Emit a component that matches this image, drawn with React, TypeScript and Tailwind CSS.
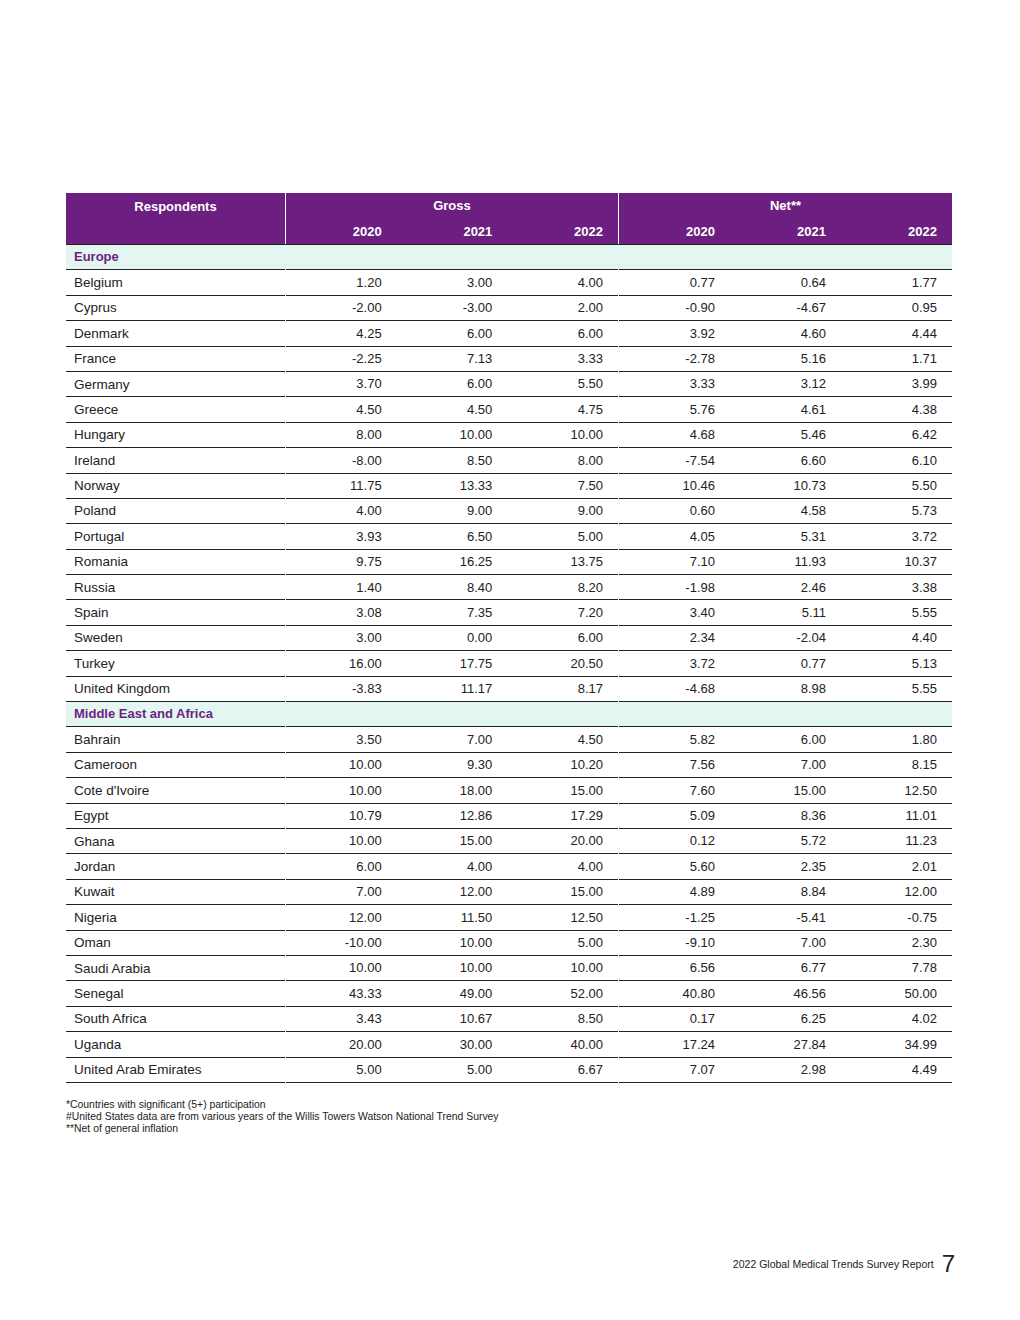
type Row = [string, string, string, string, string, string, string];

interface Section {
  title: string;
  rows: Row[];
}

const sections: Section[] = [
  {
    title: "Europe",
    rows: [
      ["Belgium", "1.20", "3.00", "4.00", "0.77", "0.64", "1.77"],
      ["Cyprus", "-2.00", "-3.00", "2.00", "-0.90", "-4.67", "0.95"],
      ["Denmark", "4.25", "6.00", "6.00", "3.92", "4.60", "4.44"],
      ["France", "-2.25", "7.13", "3.33", "-2.78", "5.16", "1.71"],
      ["Germany", "3.70", "6.00", "5.50", "3.33", "3.12", "3.99"],
      ["Greece", "4.50", "4.50", "4.75", "5.76", "4.61", "4.38"],
      ["Hungary", "8.00", "10.00", "10.00", "4.68", "5.46", "6.42"],
      ["Ireland", "-8.00", "8.50", "8.00", "-7.54", "6.60", "6.10"],
      ["Norway", "11.75", "13.33", "7.50", "10.46", "10.73", "5.50"],
      ["Poland", "4.00", "9.00", "9.00", "0.60", "4.58", "5.73"],
      ["Portugal", "3.93", "6.50", "5.00", "4.05", "5.31", "3.72"],
      ["Romania", "9.75", "16.25", "13.75", "7.10", "11.93", "10.37"],
      ["Russia", "1.40", "8.40", "8.20", "-1.98", "2.46", "3.38"],
      ["Spain", "3.08", "7.35", "7.20", "3.40", "5.11", "5.55"],
      ["Sweden", "3.00", "0.00", "6.00", "2.34", "-2.04", "4.40"],
      ["Turkey", "16.00", "17.75", "20.50", "3.72", "0.77", "5.13"],
      ["United Kingdom", "-3.83", "11.17", "8.17", "-4.68", "8.98", "5.55"],
    ],
  },
  {
    title: "Middle East and Africa",
    rows: [
      ["Bahrain", "3.50", "7.00", "4.50", "5.82", "6.00", "1.80"],
      ["Cameroon", "10.00", "9.30", "10.20", "7.56", "7.00", "8.15"],
      ["Cote d'Ivoire", "10.00", "18.00", "15.00", "7.60", "15.00", "12.50"],
      ["Egypt", "10.79", "12.86", "17.29", "5.09", "8.36", "11.01"],
      ["Ghana", "10.00", "15.00", "20.00", "0.12", "5.72", "11.23"],
      ["Jordan", "6.00", "4.00", "4.00", "5.60", "2.35", "2.01"],
      ["Kuwait", "7.00", "12.00", "15.00", "4.89", "8.84", "12.00"],
      ["Nigeria", "12.00", "11.50", "12.50", "-1.25", "-5.41", "-0.75"],
      ["Oman", "-10.00", "10.00", "5.00", "-9.10", "7.00", "2.30"],
      ["Saudi Arabia", "10.00", "10.00", "10.00", "6.56", "6.77", "7.78"],
      ["Senegal", "43.33", "49.00", "52.00", "40.80", "46.56", "50.00"],
      ["South Africa", "3.43", "10.67", "8.50", "0.17", "6.25", "4.02"],
      ["Uganda", "20.00", "30.00", "40.00", "17.24", "27.84", "34.99"],
      ["United Arab Emirates", "5.00", "5.00", "6.67", "7.07", "2.98", "4.49"],
    ],
  },
];

const years = ["2020", "2021", "2022"];

const DataRow = ({ row }: { row: Row }) => (
  <div className="grid grid-cols-[219px_332px_333px] gap-x-px h-[25.4px] text-[13px] text-[#222]">
    <div className="flex items-center pl-2 pt-px border-b border-[#222] text-[13.5px]">{row[0]}</div>
    <div className="grid grid-cols-3 border-b border-[#222]">
      {row.slice(1, 4).map((v, i) => (
        <div key={i} className="flex items-center justify-end pr-[15px]">
          {v}
        </div>
      ))}
    </div>
    <div className="grid grid-cols-3 border-b border-[#222]">
      {row.slice(4, 7).map((v, i) => (
        <div key={i} className="flex items-center justify-end pr-[15px]">
          {v}
        </div>
      ))}
    </div>
  </div>
);

const SectionRow = ({ title }: { title: string }) => (
  <div className="grid grid-cols-[219px_332px_333px] gap-x-px h-[25.4px] bg-[#e3f6f1]">
    <div className="flex items-center pl-2 border-b border-[#222] font-bold text-[13px] text-[#6b1f80]">
      {title}
    </div>
    <div className="border-b border-[#222]" />
    <div className="border-b border-[#222]" />
  </div>
);

export default function App() {
  return (
    <div
      className="w-[1020px] h-[1320px] bg-white flex flex-col"
      style={{ fontFamily: '"Liberation Sans", Arial, sans-serif' }}
    >
      <div className="pt-[193px] pl-[66px]">
        <div className="w-[886px]">
          {/* header */}
          <div className="grid grid-cols-[219px_332px_333px] gap-x-px text-white font-bold text-[13px] border-b border-[#222]">
            <div className="bg-[#6c1f80] h-[51px] flex justify-center pt-[4px]">Respondents</div>
            <div className="bg-[#6c1f80] h-[51px] flex flex-col">
              <div className="h-[26px] flex items-center justify-center">Gross</div>
              <div className="grid grid-cols-3 h-[25px]">
                {years.map((y) => (
                  <div key={y} className="flex items-center justify-end pr-[15px]">
                    {y}
                  </div>
                ))}
              </div>
            </div>
            <div className="bg-[#6c1f80] h-[51px] flex flex-col">
              <div className="h-[26px] flex items-center justify-center">Net**</div>
              <div className="grid grid-cols-3 h-[25px]">
                {years.map((y) => (
                  <div key={y} className="flex items-center justify-end pr-[15px]">
                    {y}
                  </div>
                ))}
              </div>
            </div>
          </div>

          {sections.map((s) => (
            <div key={s.title}>
              <SectionRow title={s.title} />
              {s.rows.map((r) => (
                <DataRow key={r[0]} row={r} />
              ))}
            </div>
          ))}
        </div>

        <div className="mt-[16px] text-[10.4px] leading-[12px] text-[#222]">
          <p>*Countries with significant (5+) participation</p>
          <p>#United States data are from various years of the Willis Towers Watson National Trend Survey</p>
          <p>**Net of general inflation</p>
        </div>
      </div>

      <div className="mt-auto mb-[45px] pr-[65px] flex items-end justify-end gap-[8px] text-[#222]">
        <span className="text-[10.5px] mb-[2px]">2022 Global Medical Trends Survey Report</span>
        <span className="text-[24px] leading-[22px] font-light">7</span>
      </div>
    </div>
  );
}
